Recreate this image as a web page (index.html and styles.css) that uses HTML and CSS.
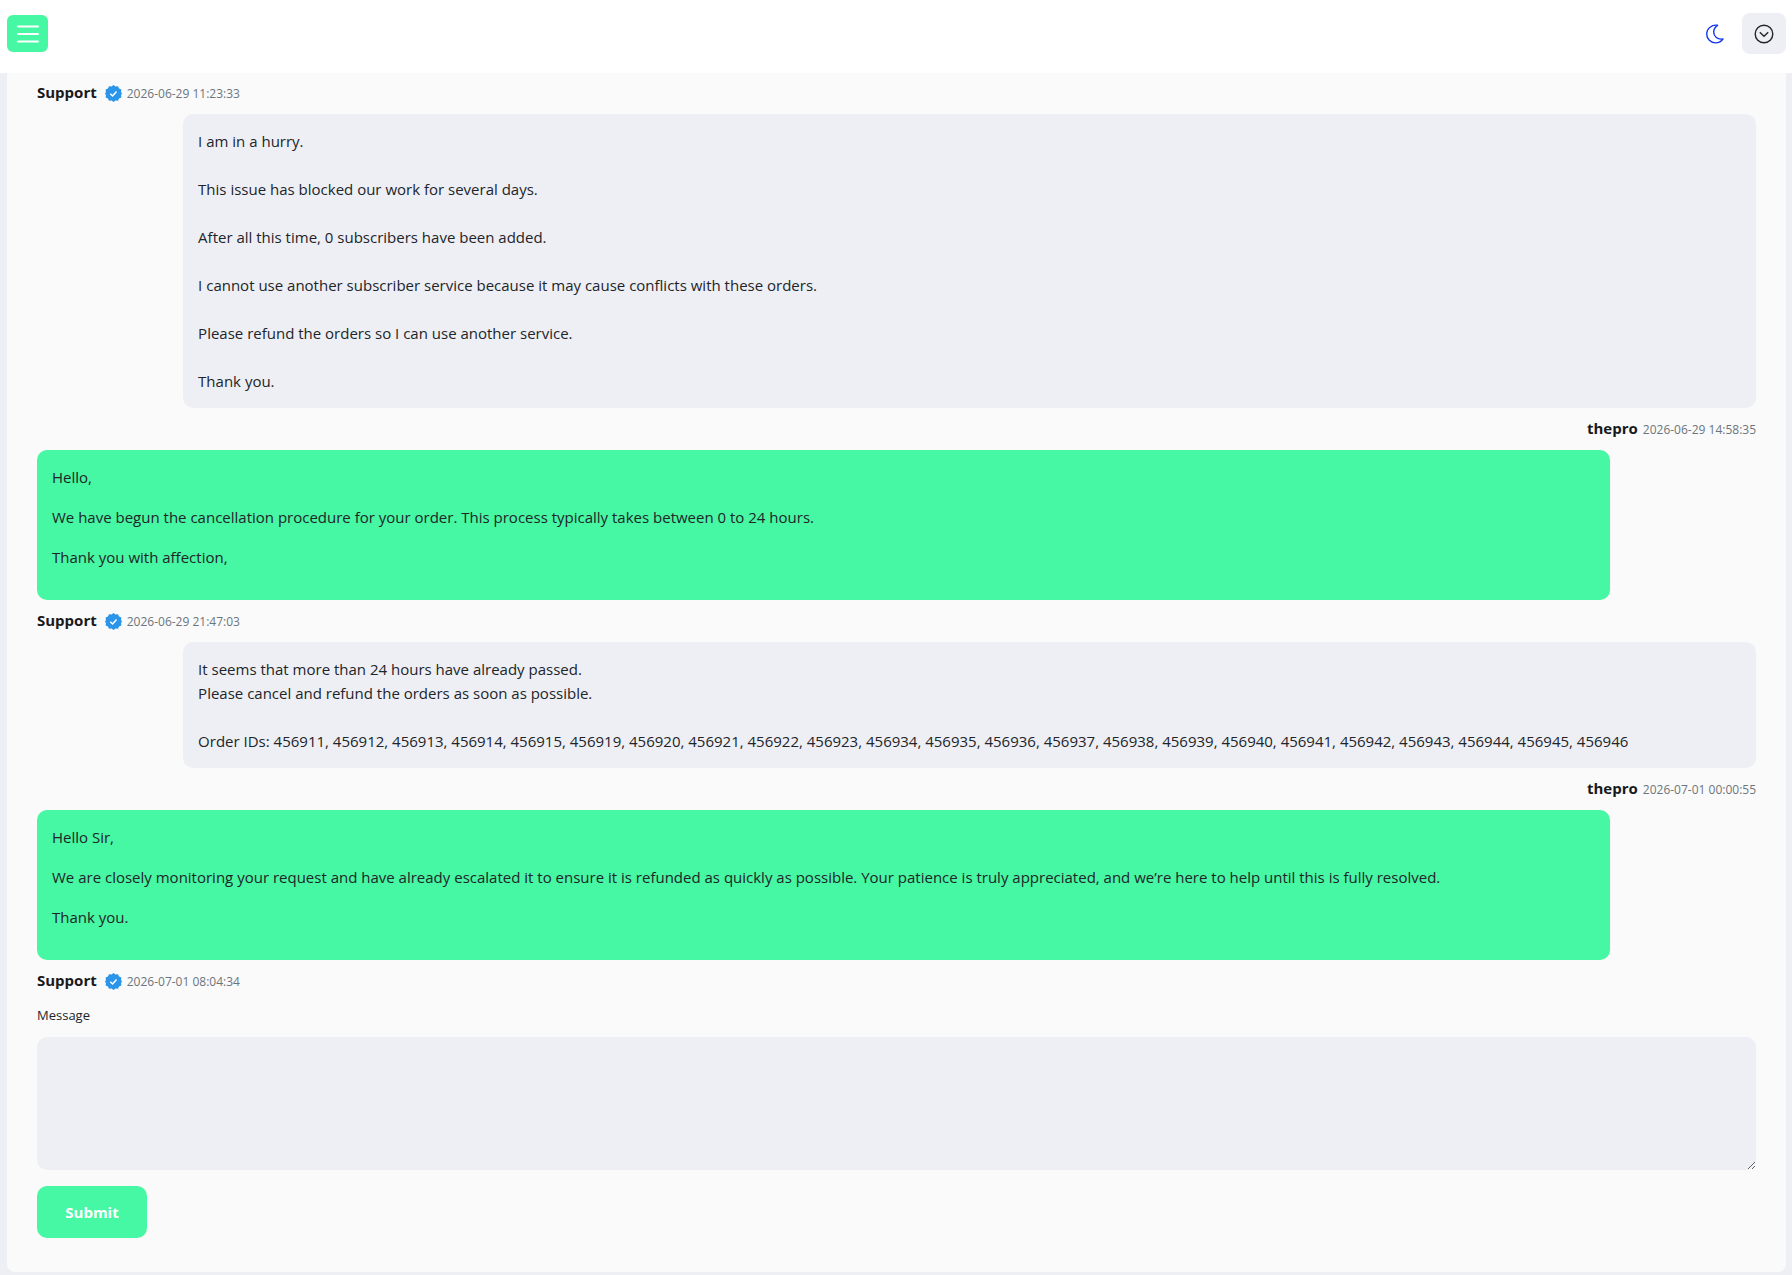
FILE: index.html
```
<!DOCTYPE html>
<html lang="en">
<head>
    <meta charset="UTF-8">
    <meta name="viewport" content="width=device-width, initial-scale=1.0">
    <title>Support Ticket</title>
    <link rel="stylesheet" href="styles.css">
</head>
<body>
    <svg class="sprite" aria-hidden="true">
        <symbol id="verified" viewBox="0 0 24 24">
            <path fill="#2b95e9" d="M12 0l2.9 2.1 3.5-.4 1.4 3.2 3.3 1.5-.4 3.5L24 12l-1.3 2.1.4 3.5-3.3 1.5-1.4 3.2-3.5-.4L12 24l-2.9-2.1-3.5.4-1.4-3.2-3.3-1.5.4-3.5L0 12l1.3-2.1-.4-3.5 3.3-1.5 1.4-3.2 3.5.4z"/>
            <path fill="none" stroke="#fff" stroke-width="2.2" d="M7.5 12.4l3.2 3.1 5.6-6.3"/>
        </symbol>
    </svg>

    <header class="topbar">
        <button class="menu-btn" type="button" aria-label="Menu">
            <svg width="24" height="20" viewBox="0 0 24 20"><path d="M2 2.5h20M2 10h20M2 17.5h20" stroke="#fff" stroke-width="2" stroke-linecap="round"/></svg>
        </button>
        <div class="topbar-right">
            <button class="theme-btn" type="button" aria-label="Dark mode">
                <svg width="20" height="20" viewBox="0 0 20 20"><path d="M12.6 1.3C7 .3 1.7 4.4 1.7 10c0 5 4 8.9 8.9 8.9 3 0 5.7-1.4 7.4-4-5.5 1-9.3-2.5-9.3-7 0-2.7 1.4-5 3.9-6.6z" fill="none" stroke="#1236ee" stroke-width="1.4" stroke-linejoin="round"/></svg>
            </button>
            <button class="account-btn" type="button" aria-label="Account">
                <svg width="20" height="20" viewBox="0 0 20 20" fill="none" stroke="#212529" stroke-width="1.4"><circle cx="10" cy="10" r="8.8"/><path d="M5.8 8.3l4.2 4 4.2-4"/></svg>
            </button>
        </div>
    </header>

    <main class="ticket">
        <div class="meta">
            <strong>Support</strong>
            <svg class="badge"><use href="#verified"/></svg>
            <small>2026-06-29 11:23:33</small>
        </div>
        <div class="bubble bubble-user">I am in a hurry.<br><br>This issue has blocked our work for several days.<br><br>After all this time, 0 subscribers have been added.<br><br>I cannot use another subscriber service because it may cause conflicts with these orders.<br><br>Please refund the orders so I can use another service.<br><br>Thank you.</div>
        <div class="meta meta-user">
            <strong>thepro</strong>
            <small>2026-06-29 14:58:35</small>
        </div>

        <div class="bubble bubble-support">
            <p>Hello,</p>
            <p>We have begun the cancellation procedure for your order. This process typically takes between 0 to 24 hours.</p>
            <p>Thank you with affection,</p>
        </div>
        <div class="meta">
            <strong>Support</strong>
            <svg class="badge"><use href="#verified"/></svg>
            <small>2026-06-29 21:47:03</small>
        </div>

        <div class="bubble bubble-user">It seems that more than 24 hours have already passed.<br>Please cancel and refund the orders as soon as possible.<br><br>Order IDs: 456911, 456912, 456913, 456914, 456915, 456919, 456920, 456921, 456922, 456923, 456934, 456935, 456936, 456937, 456938, 456939, 456940, 456941, 456942, 456943, 456944, 456945, 456946</div>
        <div class="meta meta-user">
            <strong>thepro</strong>
            <small>2026-07-01 00:00:55</small>
        </div>

        <div class="bubble bubble-support">
            <p>Hello Sir,</p>
            <p>We are closely monitoring your request and have already escalated it to ensure it is refunded as quickly as possible. Your patience is truly appreciated, and we’re here to help until this is fully resolved.</p>
            <p>Thank you.</p>
        </div>
        <div class="meta">
            <strong>Support</strong>
            <svg class="badge"><use href="#verified"/></svg>
            <small>2026-07-01 08:04:34</small>
        </div>

        <form class="reply">
            <label for="message">Message</label>
            <textarea id="message" name="message"></textarea>
            <button class="submit-btn" type="submit">Submit</button>
        </form>
    </main>
</body>
</html>
```
FILE: styles.css
```
* {
    box-sizing: border-box;
}
body {
    margin: 0;
    font-family: "Segoe UI", "Open Sans", "Noto Sans", sans-serif;
    font-size: 15px;
    line-height: 24px;
    color: #212529;
    background-color: #eeeff5;
}
button {
    border: none;
    padding: 0;
    font-family: inherit;
    cursor: pointer;
}
.sprite {
    display: none;
}
.topbar {
    position: sticky;
    top: 0;
    z-index: 10;
    display: flex;
    justify-content: space-between;
    align-items: center;
    height: 73px;
    padding: 0 6px 6px 7px;
    background-color: #fff;
}
.topbar-right {
    display: flex;
    align-items: center;
    gap: 17px;
}
.menu-btn,
.theme-btn,
.account-btn {
    display: flex;
    align-items: center;
    justify-content: center;
}
.menu-btn {
    width: 41px;
    height: 37px;
    border-radius: 6px;
    background-color: #46f7a3;
}
.theme-btn {
    background: none;
}
.account-btn {
    width: 44px;
    height: 41px;
    border-radius: 8px;
    background-color: #eeeff5;
}
.ticket {
    margin: -1px 6px 3px 7px;
    padding: 0 30px 34px;
    border-radius: 0 0 8px 8px;
    background-color: #fafafa;
}
.meta {
    display: flex;
    align-items: baseline;
    gap: 5px;
    height: 42px;
    padding: 8px 0;
}
.meta strong {
    font-weight: 700;
    color: #19191c;
}
.meta small {
    font-size: 12px;
    color: #6c757d;
}
.meta-user {
    justify-content: flex-end;
}
.badge {
    align-self: center;
    width: 17px;
    height: 17px;
    margin-left: 3px;
}
.bubble {
    padding: 15px;
    border-radius: 10px;
}
.bubble p {
    margin: 0 0 16px;
}
.bubble-user {
    margin-left: 8.5%;
    background-color: #eeeff5;
}
.bubble-support {
    margin-right: 8.5%;
    background-color: #46f7a3;
}
.reply {
    display: flex;
    flex-direction: column;
    align-items: flex-start;
    padding-top: 1px;
}
.reply label {
    margin-bottom: 10px;
    font-size: 13px;
}
.reply textarea {
    width: 100%;
    height: 133px;
    padding: 15px;
    border: none;
    border-radius: 10px;
    font: inherit;
    background-color: #eeeff5;
    resize: vertical;
}
.submit-btn {
    min-width: 110px;
    height: 52px;
    margin-top: 16px;
    border-radius: 10px;
    font-size: 15px;
    font-weight: 700;
    color: #fff;
    background-color: #46f7a3;
}
```
